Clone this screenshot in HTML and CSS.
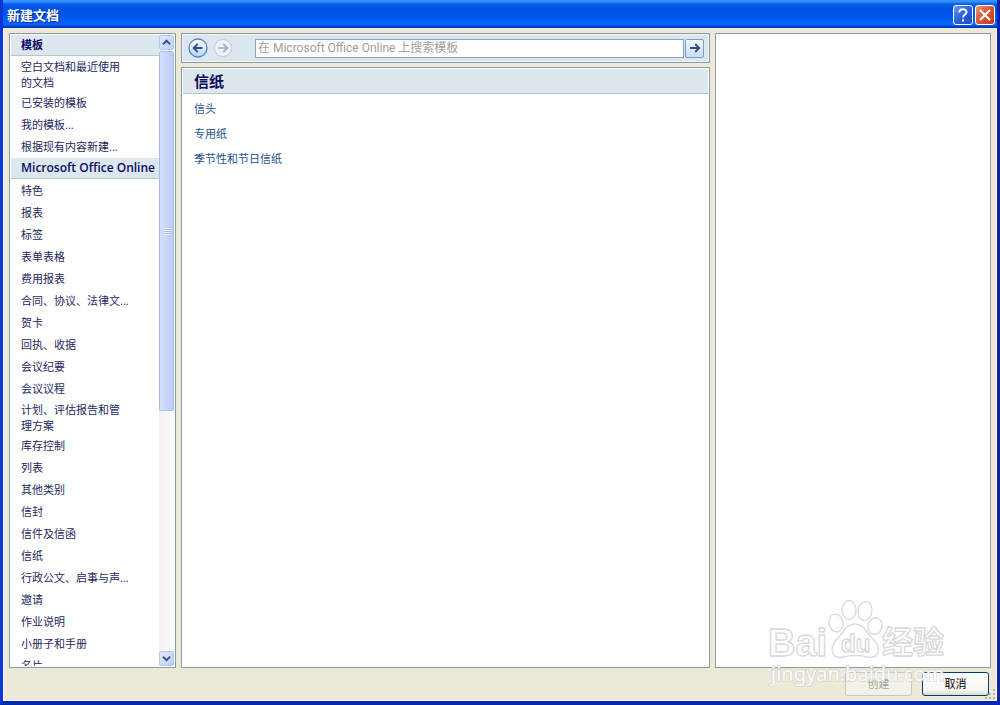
FILE: index.html
```html
<!DOCTYPE html>
<html lang="zh-CN">
<head>
<meta charset="utf-8">
<title>新建文档</title>
<link rel="stylesheet" href="styles.css">
</head>
<body>
<div class="window">
  <header class="titlebar">
    <h1 class="title">新建文档</h1>
    <button class="caption help" type="button" aria-label="帮助">
      <svg width="20" height="20" viewBox="0 0 20 20" fill="none" stroke="#fff" stroke-width="2"><path d="M6.3 7.6C6.3 3.1 13.7 3.2 13.5 7.2C13.4 9.6 10 9.6 10 12.6M10 14.2v2.3"/></svg>
    </button>
    <button class="caption close" type="button" aria-label="关闭">
      <svg width="20" height="20" viewBox="0 0 20 20" fill="none" stroke="#fff" stroke-width="2.2"><path d="M5 5l10 10M15 5l-10 10"/></svg>
    </button>
  </header>
  <main class="body">
    <div class="columns">
      <div class="panel sidebar">
        <nav class="list" aria-label="模板类别">
          <h2 class="group">模板</h2>
          <button class="item wrapped" type="button">空白文档和最近使用<br>的文档</button>
          <button class="item" type="button">已安装的模板</button>
          <button class="item" type="button">我的模板...</button>
          <button class="item" type="button">根据现有内容新建...</button>
          <h2 class="group online">Microsoft Office Online</h2>
          <button class="item" type="button">特色</button>
          <button class="item" type="button">报表</button>
          <button class="item" type="button">标签</button>
          <button class="item" type="button">表单表格</button>
          <button class="item" type="button">费用报表</button>
          <button class="item" type="button">合同、协议、法律文...</button>
          <button class="item" type="button">贺卡</button>
          <button class="item" type="button">回执、收据</button>
          <button class="item" type="button">会议纪要</button>
          <button class="item" type="button">会议议程</button>
          <button class="item wrapped" type="button">计划、评估报告和管<br>理方案</button>
          <button class="item" type="button">库存控制</button>
          <button class="item" type="button">列表</button>
          <button class="item" type="button">其他类别</button>
          <button class="item" type="button">信封</button>
          <button class="item" type="button">信件及信函</button>
          <button class="item" type="button">信纸</button>
          <button class="item" type="button">行政公文、启事与声...</button>
          <button class="item" type="button">邀请</button>
          <button class="item" type="button">作业说明</button>
          <button class="item" type="button">小册子和手册</button>
          <button class="item" type="button">名片</button>
        </nav>
        <div class="scrollbar">
          <button class="arrow" type="button" aria-label="向上滚动"><svg width="9" height="7" viewBox="0 0 9 7" fill="none" stroke="#3d5685" stroke-width="2"><path d="M1 5.2L4.5 1.7L8 5.2"/></svg></button>
          <div class="track"><div class="thumb"><span class="grip"></span></div></div>
          <button class="arrow" type="button" aria-label="向下滚动"><svg width="9" height="7" viewBox="0 0 9 7" fill="none" stroke="#3d5685" stroke-width="2"><path d="M1 1.7L4.5 5.2L8 1.7"/></svg></button>
        </div>
      </div>
      <div class="middle">
        <form class="panel search">
          <button class="nav" type="button" aria-label="后退"><svg width="20" height="20" viewBox="0 0 20 20" fill="none">
            <defs><linearGradient id="orb" x1="0" y1="0" x2="0" y2="1"><stop offset="0" stop-color="#fff"/><stop offset=".5" stop-color="#dceafb"/><stop offset="1" stop-color="#b4d2f6"/></linearGradient></defs>
            <circle cx="10" cy="10" r="9" fill="url(#orb)" stroke="#5d84b8" stroke-width="1.3"/><path d="M14.5 10H6M9.8 5.8L5.6 10l4.2 4.2" stroke="#2c4f87" stroke-width="1.8"/></svg></button>
          <button class="nav" type="button" aria-label="前进" disabled><svg width="20" height="20" viewBox="0 0 20 20" fill="none"><circle cx="10" cy="10" r="8.5" fill="#edf3fa" stroke="#b9c9de"/><path d="M5 10h9M10.2 5.8l4.2 4.2l-4.2 4.2" stroke="#9aadc6" stroke-width="1.7"/></svg></button>
          <input class="query" type="text" aria-label="搜索模板" placeholder="在 Microsoft Office Online 上搜索模板">
          <button class="go" type="button" aria-label="开始搜索"><svg width="12" height="12" viewBox="0 0 12 12" fill="none" stroke="#2c5288" stroke-width="1.8"><path d="M1 6h9M6.2 2l4 4l-4 4"/></svg></button>
        </form>
        <section class="panel results">
          <h2 class="heading">信纸</h2>
          <ul class="links">
            <li><a href="#letterhead">信头</a></li>
            <li><a href="#special">专用纸</a></li>
            <li><a href="#seasonal">季节性和节日信纸</a></li>
          </ul>
        </section>
      </div>
      <aside class="panel preview" aria-label="预览"></aside>
    </div>
    <footer class="actions">
      <button class="push" type="button" disabled>创建</button>
      <button class="push default" type="button">取消</button>
    </footer>
    <svg class="resize" width="11" height="11" viewBox="0 0 11 11" fill="#b8b4a2"><path d="M8 0h2v2h-2zM8 4h2v2h-2zM4 4h2v2h-2zM8 8h2v2h-2zM4 8h2v2h-2zM0 8h2v2h-2z"/></svg>
  </main>
  <svg class="watermark" width="184" height="96" viewBox="0 0 184 96" aria-hidden="true">
    <g fill="#fff" fill-opacity=".8" stroke="#d9d9d9" stroke-width="1.3">
      <ellipse cx="69" cy="24" rx="7" ry="9" transform="rotate(-12 69 24)"/>
      <ellipse cx="82" cy="11" rx="7" ry="9.5"/>
      <ellipse cx="98" cy="12" rx="7" ry="9.5" transform="rotate(10 98 12)"/>
      <ellipse cx="108" cy="27" rx="7" ry="8.5" transform="rotate(16 108 27)"/>
      <path d="M88 25C97 25 99 33 106 40C116 50 111 60 101 58C94 56 83 56 76 58C65 60 61 50 70 40C77 33 79 25 88 25Z"/>
    </g>
    <g class="mark">
      <text x="1" y="57" class="mark-bai">Bai</text>
      <text x="74" y="53" class="mark-du">du</text>
      <text x="115" y="54" class="mark-cn">经验</text>
    </g>
    <text x="4" y="82" class="mark-url">jingyan.baidu.com</text>
  </svg>
</div>
</body>
</html>
```
FILE: styles.css
```css
* { box-sizing: border-box; }
html, body { height: 100%; }
body { margin: 0; font: 11px/16px "Open Sans", "Noto Sans CJK SC", sans-serif; color: #15205a; }
button, input { font: inherit; color: inherit; margin: 0; padding: 0; border: 0; }
button { display: flex; align-items: center; justify-content: center; background: none; }
h1, h2, ul { margin: 0; padding: 0; }
svg { display: block; flex: none; }

.window { position: relative; display: flex; flex-direction: column; height: 100%; background: #0a36d8; overflow: hidden; border: solid #0a36d8; border-width: 0 3px 4px; border-right-color: #0824a8; border-bottom-color: #0428b0; }
.titlebar { display: flex; align-items: center; gap: 2px; height: 28px; flex: none; padding: 2px 2px 0 4px; background: linear-gradient(#3c98ff 0, #2e8bfb 2px, #0a5ee8 4px, #0052e2 9px, #0055ea 16px, #0566ff 23px, #0560f5 25px, #0037c0 27px); }
.title { flex: 1; font-size: 13px; line-height: 20px; font-weight: 700; color: #fff; text-shadow: 1px 1px 1px #0a2a80; }
.caption { width: 20px; height: 20px; border: 1px solid #fff; border-radius: 3px; }
.help { background: linear-gradient(135deg, #6f9bf0, #2a5fda 50%, #1f4fc4); }
.close { background: linear-gradient(135deg, #ee9a80, #d9532f 50%, #c23f1b); }

.body { position: relative; flex: 1; min-height: 0; display: flex; flex-direction: column; padding: 5px 5px 0; background: #ece9d8; border: 1px solid #f8f7f2; border-top: 0; }
.columns { flex: 1; min-height: 0; display: grid; grid-template-columns: 167px 23fr 12fr; gap: 5px; }
.panel { background: #fff; border: 1px solid #8a9ba5; min-width: 0; min-height: 0; }

.sidebar { display: flex; padding: 1px; overflow: hidden; }
.list { flex: 1; min-width: 0; overflow: hidden; }
.group { height: 21px; margin-bottom: 1px; padding-left: 10px; font-size: 11px; line-height: 20px; font-weight: 700; white-space: nowrap; background: #dde7ee; border-bottom: 1px solid #b9c4cc; color: #0b0b66; }
.online { font-size: 12px; font-weight: 600; }
.item { width: 100%; min-height: 22px; justify-content: flex-start; padding: 3px 10px; text-align: left; white-space: nowrap; color: #24285c; }
.wrapped { padding: 2px 10px 1px; }

.scrollbar { width: 15px; display: flex; flex-direction: column; background: linear-gradient(90deg, #f2f1ec, #fdfdfb); }
.arrow { width: 15px; height: 15px; flex: none; border: 1px solid #b3c6ef; border-radius: 2px; background: linear-gradient(135deg, #e1eafe, #bccdf8); }
.track { flex: 1; padding-top: 1px; }
.thumb { display: flex; align-items: center; justify-content: center; height: 60%; border: 1px solid #a9bde8; border-radius: 2px; background: linear-gradient(90deg, #d3e0ff, #bccbfa); }
.grip { width: 6px; height: 7px; background: repeating-linear-gradient(#eef4ff 0 1px, #a9bfee 1px 2px); }

.middle { display: flex; flex-direction: column; gap: 4px; min-width: 0; }
.search { display: flex; align-items: center; height: 30px; padding: 0 5px 0 6px; background: #dce6ee; box-shadow: inset 0 0 0 1px #f2f6f9; }
.nav { margin-right: 5px; }
.query { flex: 1; min-width: 0; height: 19px; margin-left: 17px; padding: 0 2px; border: 1px solid #8ba3b8; background: #fff; font: 12px Roboto, "Noto Sans CJK SC", sans-serif; }
.query::placeholder { color: #a29f98; opacity: 1; }
.go { width: 19px; height: 19px; margin-left: 1px; border: 1px solid #7d9cc0; border-radius: 2px; background: linear-gradient(#f5faff, #c5dcf7); }
.results { flex: 1; padding: 1px; }
.heading { height: 25px; padding-left: 11px; font-size: 15px; line-height: 24px; font-weight: 700; background: #dde7ee; border-bottom: 1px solid #b9c4cc; color: #0b0b5c; }
.links { display: grid; gap: 9px; padding: 7px 11px; list-style: none; }
.links a { color: #24508c; text-decoration: none; }

.actions { display: flex; flex: none; justify-content: flex-end; gap: 10px; height: 32px; padding: 4px 2px 4px 0; }
.push { width: 67px; height: 24px; border: 1px solid #c9c7ba; border-radius: 3px; color: #a5a294; background: #f3f2e9; }
.default { border-color: #003c74; color: #000; background: linear-gradient(#fff, #f6f5f0 80%, #dcd8cc); }
.resize { position: absolute; right: 0; bottom: 0; }

.watermark { position: absolute; right: 46px; bottom: 6px; pointer-events: none; }
.mark { fill: #fff; stroke: #d9d9d9; stroke-width: 1.3px; }
.mark-bai { font: 700 38px "Liberation Sans", sans-serif; }
.mark-du { font: 700 24px "Liberation Sans", sans-serif; }
.mark-cn { font: 700 31px "Noto Sans CJK SC", sans-serif; }
.mark-url { font: 20px "Noto Sans", sans-serif; fill: #fff; fill-opacity: .9; stroke: #c8c8c8; stroke-width: 2px; stroke-opacity: .5; paint-order: stroke; }
```
